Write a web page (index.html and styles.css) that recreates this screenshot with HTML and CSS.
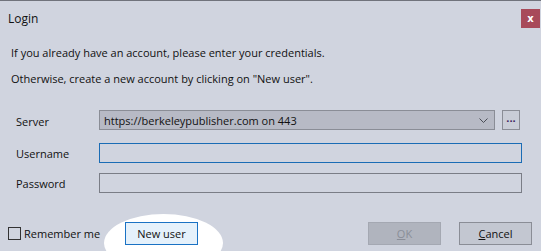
FILE: index.html
```html
<!DOCTYPE html>
<html lang="en">
<head>
  <meta charset="UTF-8" />
  <title>Login</title>
  <link rel="stylesheet" href="styles.css">
</head>
<body>

<div class="dialog">
  <div class="titlebar">
    <span class="title">Login</span>
    <button class="close">x</button>
  </div>

  <p class="intro">If you already have an account, please enter your credentials.</p>
  <p class="intro">Otherwise, create a new account by clicking on "New user".</p>

  <div class="form">
    <label>Server</label>
    <div class="server-row">
      <div class="combo">
        <span>https://berkeleypublisher.com on 443</span>
        <svg class="chevron" width="9" height="5" viewBox="0 0 9 5">
          <polyline points="0.5,0.5 4.5,4.5 8.5,0.5" fill="none" stroke="#4a4d55" stroke-width="1"/>
        </svg>
      </div>
      <button class="more">...</button>
    </div>

    <label>Username</label>
    <input type="text" class="field focused">

    <label>Password</label>
    <input type="password" class="field">
  </div>

  <div class="footer">
    <label class="remember"><span class="box"></span>Remember me</label>
    <div class="highlight">
      <button class="btn new-user">New user</button>
    </div>
    <div class="spacer"></div>
    <button class="btn ok" disabled><u>O</u>K</button>
    <button class="btn cancel"><u>C</u>ancel</button>
  </div>
</div>

</body>
</html>
```

FILE: styles.css
```css
* { box-sizing: border-box; }

body {
  margin: 0;
  background-color: #d0d4df;
  font-family: 'Open Sans', 'Noto Sans', sans-serif;
  font-size: 11px;
  color: #111;
}

.dialog {
  width: 541px;
  height: 251px;
  border-top: 1px solid #70737c;
  position: relative;
  overflow: hidden;
}

.titlebar {
  display: flex;
  justify-content: space-between;
  align-items: center;
  height: 34px;
  padding: 0 1px 0 8px;
}

.title { font-size: 12px; }

.close {
  width: 19px;
  height: 19px;
  padding: 0;
  border: none;
  background-color: #a84a5a;
  color: #fff;
  font-family: 'DejaVu Sans', sans-serif;
  font-size: 10px;
  font-weight: bold;
  line-height: 17px;
}

.intro {
  margin: 0;
  padding-left: 11px;
  height: 26px;
  line-height: 26px;
}

.intro:first-of-type { margin-top: 5px; }

.form {
  display: grid;
  grid-template-columns: 83px 1fr;
  row-gap: 10px;
  align-items: center;
  padding: 18px 19px 0 16px;
}

.server-row {
  display: flex;
  gap: 7px;
  margin-bottom: 3px;
}

.combo {
  flex: 1;
  height: 20px;
  display: flex;
  align-items: center;
  justify-content: space-between;
  padding: 0 6px 0 4px;
  background-color: #b7bac5;
  border: 1px solid #8a8d96;
}

.more {
  width: 18px;
  height: 20px;
  padding: 0 0 4px;
  border: 1px solid #8a8d96;
  background-color: #c9cdd7;
  color: #3e2260;
  font-family: inherit;
  font-size: 11px;
  font-weight: bold;
  line-height: 12px;
  margin-right: 2px;
}

.field {
  height: 20px;
  width: 100%;
  margin: 0;
  border: 1px solid #7a7d86;
  background-color: #d0d4df;
}

.field.focused { border-color: #1a6cb5; }

.footer {
  display: flex;
  align-items: center;
  position: absolute;
  left: 8px;
  right: 9px;
  top: 221px;
  height: 23px;
}

.remember {
  display: flex;
  align-items: center;
  gap: 3px;
  width: 117px;
}

.box {
  width: 13px;
  height: 13px;
  border: 1px solid #333;
}

.highlight {
  position: relative;
  z-index: 0;
}

.highlight::before {
  content: "";
  position: absolute;
  left: -21px;
  top: -8px;
  width: 119px;
  height: 58px;
  border-radius: 50%;
  background: #fff;
  z-index: -1;
}

.spacer { flex: 1; }

.btn {
  width: 73px;
  height: 23px;
  padding: 0;
  font-family: inherit;
  font-size: 11px;
  border: 1px solid #8a8d96;
  background-color: #c3c7d1;
  color: #111;
}

.new-user {
  background-color: #e5f1fb;
  border-color: #1a72c4;
}

.ok {
  background-color: #b0b4be;
  border-color: #a4a8b2;
  color: #8a8e98;
  margin-right: 18px;
}
```
